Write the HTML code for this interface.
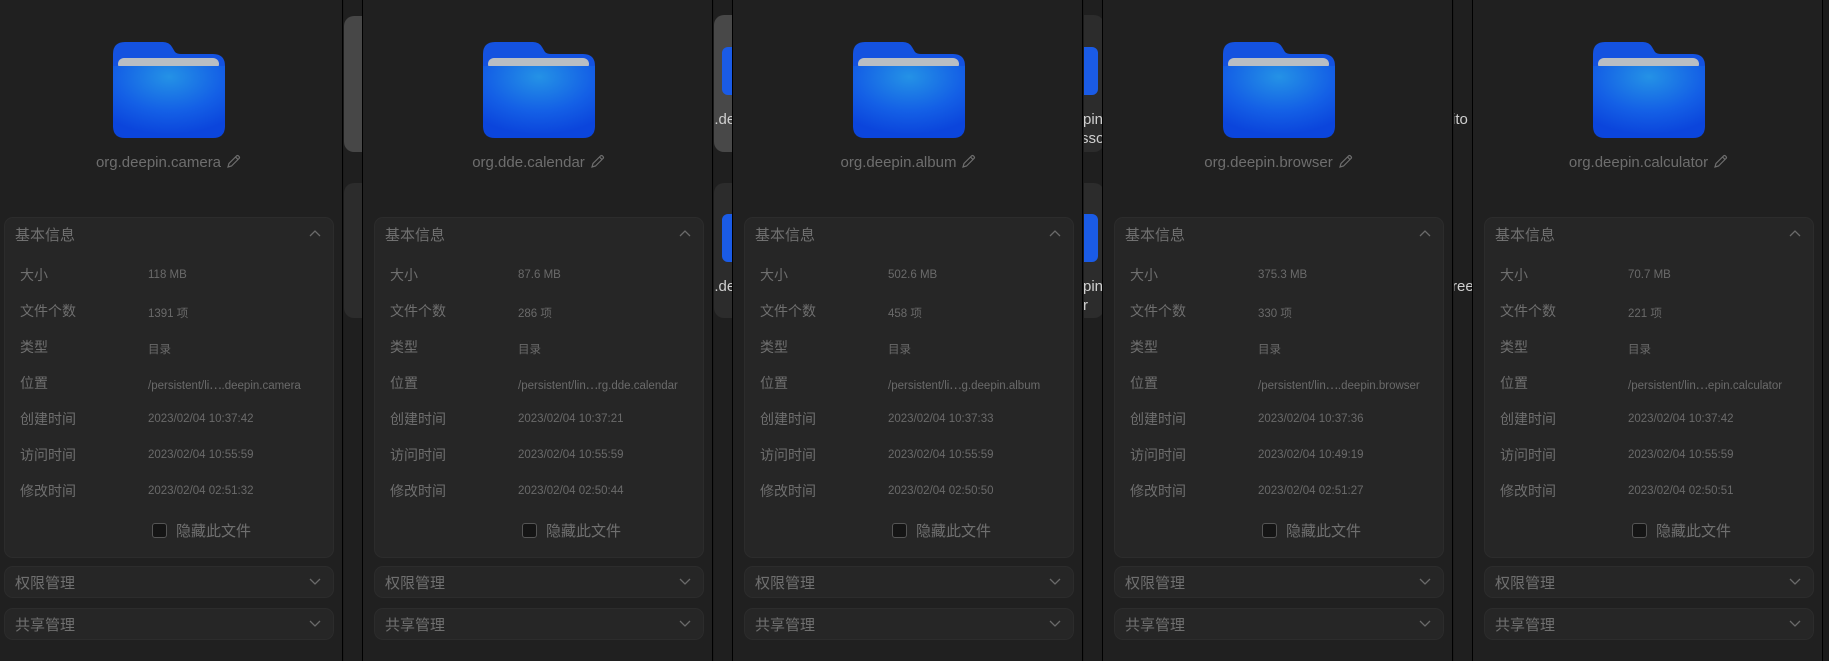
<!DOCTYPE html>
<html><head><meta charset="utf-8"><style>
*{margin:0;padding:0;box-sizing:border-box}
body{width:1829px;height:661px;background:#1b1b1b;position:relative;overflow:hidden;font-family:"Liberation Sans","Noto Sans CJK SC",sans-serif}
.gap{position:absolute;top:0;height:661px;width:18px;background:#1f1f1f;overflow:hidden}
.tile{position:absolute;left:0;width:40px;border-radius:10px}
.fb{position:absolute;width:20px;height:48px;background:#1a5be6;border-radius:6px}
.gt{position:absolute;color:#cfcfcf;font-size:15px;white-space:nowrap}
.panel{position:absolute;top:0;width:351px;height:661px;background:#202020;border-left:1px solid #000;border-right:1px solid #000}
.folder{position:absolute;left:120px;top:42px}
.name{position:absolute;top:154px;left:0;width:351px;text-align:center;color:#6e6e6e;font-size:15px}
.name svg{vertical-align:-2px;margin-left:5px}
.box{position:absolute;left:11px;width:330px;background:#262626;border:1px solid #2c2c2c;border-radius:9px}
.hd{position:absolute;left:10px;color:#707070;font-size:15px}
.chev{position:absolute;right:12px;line-height:0}
.row{position:absolute;left:16px;font-size:14px;color:#6f6f6f}
.val{position:absolute;left:143px;font-size:11.5px;color:#6a6a6a;white-space:nowrap}
.cb{position:absolute;left:148px;top:523px;width:15px;height:15px;border:1.5px solid #555;border-radius:3px;background:#151515}
.cbt{position:absolute;left:175px;top:520px;font-size:15px;color:#707070}
</style></head><body>

<div class="gap" style="left:344px">
 <div class="tile" style="top:16px;height:136px;background:#474747"></div>
 <div class="tile" style="top:183px;height:135px;background:#2c2c2c"></div>
</div>
<div class="gap" style="left:714px">
 <div class="tile" style="top:15px;height:137px;background:#484848"></div>
 <div class="fb" style="left:8px;top:47px"></div>
 <div class="gt" style="left:-8px;top:111px">g.de</div>
 <div class="tile" style="top:183px;height:135px;background:#2c2c2c"></div>
 <div class="fb" style="left:8px;top:214px"></div>
 <div class="gt" style="left:-8px;top:278px">g.de</div>
</div>
<div class="gap" style="left:1084px">
 <div class="tile" style="top:15px;height:137px;background:#2c2c2c;left:-20px"></div>
 <div class="fb" style="left:-6px;top:47px"></div>
 <div class="gt" style="left:-1px;top:111px">pin</div>
 <div class="gt" style="left:-3px;top:130px">sso</div>
 <div class="tile" style="top:183px;height:135px;background:#2c2c2c;left:-20px"></div>
 <div class="fb" style="left:-6px;top:214px"></div>
 <div class="gt" style="left:-1px;top:278px">pin</div>
 <div class="gt" style="left:-1px;top:297px">r</div>
</div>
<div class="gap" style="left:1454px">
 <div class="gt" style="left:-2px;top:111px">ito</div>
 <div class="gt" style="left:-2px;top:278px">ree</div>
</div>

<svg width="0" height="0" style="position:absolute">
 <defs>
  <radialGradient id="g" cx="0.5" cy="0.15" r="0.8">
   <stop offset="0" stop-color="#2492e6"/><stop offset="0.6" stop-color="#1460e6"/><stop offset="1" stop-color="#0b45dc"/>
  </radialGradient>
 </defs>
</svg>

<script>
var data=[
["org.deepin.camera","118 MB","1391 项","/persistent/li⋯.deepin.camera","2023/02/04 10:37:42","2023/02/04 10:55:59","2023/02/04 02:51:32"],
["org.dde.calendar","87.6 MB","286 项","/persistent/lin⋯rg.dde.calendar","2023/02/04 10:37:21","2023/02/04 10:55:59","2023/02/04 02:50:44"],
["org.deepin.album","502.6 MB","458 项","/persistent/li⋯g.deepin.album","2023/02/04 10:37:33","2023/02/04 10:55:59","2023/02/04 02:50:50"],
["org.deepin.browser","375.3 MB","330 项","/persistent/lin⋯.deepin.browser","2023/02/04 10:37:36","2023/02/04 10:49:19","2023/02/04 02:51:27"],
["org.deepin.calculator","70.7 MB","221 项","/persistent/lin⋯epin.calculator","2023/02/04 10:37:42","2023/02/04 10:55:59","2023/02/04 02:50:51"]];
var pencil='<svg width="15" height="15" viewBox="0 0 15 15"><path d="M2 13 L3 9.5 L10.5 2 Q11.5 1 12.5 2 L13 2.5 Q14 3.5 13 4.5 L5.5 12 Z M9.5 3 L12 5.5" fill="none" stroke="#6e6e6e" stroke-width="1.2"/></svg>';
var up='<svg width="12" height="8" viewBox="0 0 12 8"><path d="M1 7 L6 2 L11 7" fill="none" stroke="#6a6a6a" stroke-width="1.3"/></svg>';
var dn='<svg width="12" height="8" viewBox="0 0 12 8"><path d="M1 1 L6 6 L11 1" fill="none" stroke="#6a6a6a" stroke-width="1.3"/></svg>';
var folder='<svg width="112" height="98" viewBox="0 0 112 98"><path d="M0 12 Q0 0 12 0 H50 Q56 0 59 5 L62 10 Q64 12 68 12 H100 Q112 12 112 24 V60 H0 Z" fill="#1452e0"/><rect x="5" y="16" width="101" height="12" rx="6" fill="#b9bec3"/><path d="M0 24 H112 V84 Q112 96 100 96 H12 Q0 96 0 84 Z" fill="url(#g)"/></svg>';
var labels=["大小","文件个数","类型","位置","创建时间","访问时间","修改时间"];
var h='';
for(var i=0;i<5;i++){var d=data[i];var L=-8+370*i;
h+='<div class="panel" style="left:'+L+'px"><div class="folder">'+folder+'</div>';
h+='<div class="name">'+d[0]+pencil+'</div>';
h+='<div class="box" style="top:217px;height:341px"><div class="hd" style="top:6px">基本信息</div><div class="chev" style="top:11px">'+up+'</div></div>';
var vals=[d[1],d[2],"目录",d[3],d[4],d[5],d[6]];
for(var r=0;r<7;r++){var y=265+36*r;
h+='<div class="row" style="left:27px;top:'+y+'px">'+labels[r]+'</div><div class="val" style="left:155px;top:'+(y+4)+'px">'+vals[r]+'</div>';}
h+='<div class="cb" style="left:159px"></div><div class="cbt" style="left:183px">隐藏此文件</div>';
h+='<div class="box" style="top:566px;height:32px"><div class="hd" style="top:5px">权限管理</div><div class="chev" style="top:11px">'+dn+'</div></div>';
h+='<div class="box" style="top:608px;height:32px"><div class="hd" style="top:5px">共享管理</div><div class="chev" style="top:11px">'+dn+'</div></div>';
h+='</div>';}
document.write(h);
</script>
</body></html>
